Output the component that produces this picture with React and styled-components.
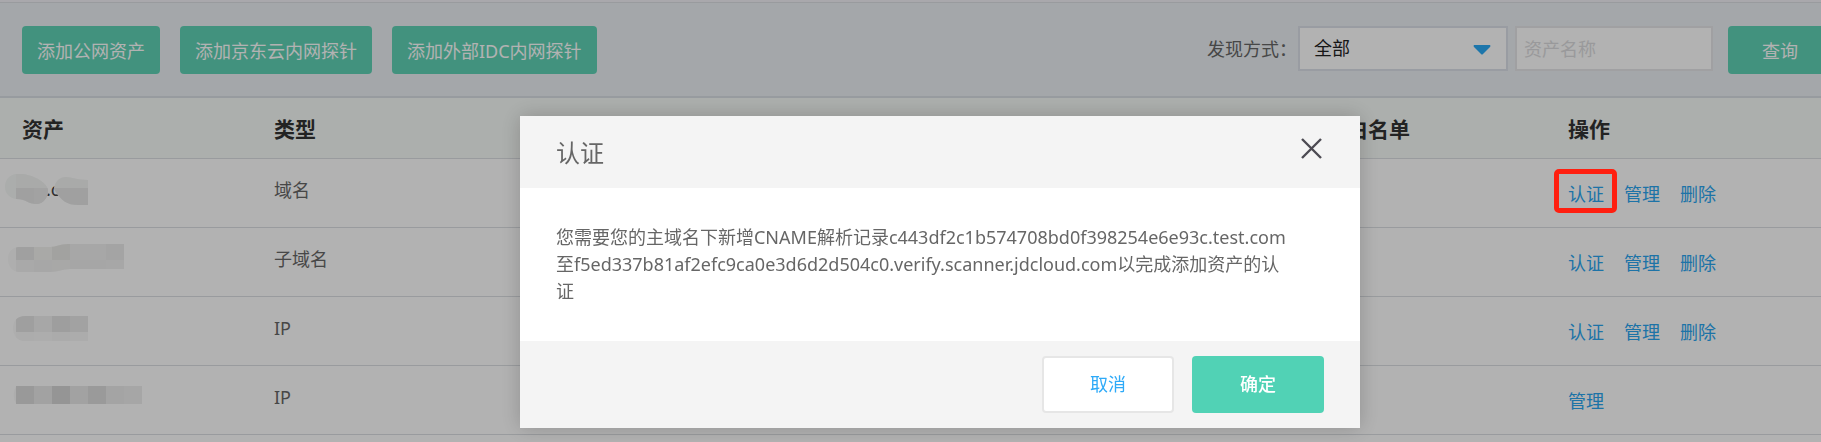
import React from "react";
import styled, { createGlobalStyle, css } from "styled-components";

const GlobalStyle = createGlobalStyle`
  *, *::before, *::after { box-sizing: border-box; }
  html { overflow: hidden; }
  body {
    margin: 0;
    background: #fff;
    color: #666;
    font-family: "Noto Sans", "Noto Sans CJK SC", sans-serif;
    font-size: 18px;
    line-height: 27px;
  }
  button, input, select { font: inherit; }
`;

const Page = styled.div`
  overflow: hidden;
  border-top: 2px solid #f3f1f7;
`;

const Toolbar = styled.header`
  display: flex;
  align-items: flex-start;
  justify-content: space-between;
  padding: 23px 0 22px 22px;
  background: #ebf0f4;
  border-top: 1px solid #dcdfe3;
  border-bottom: 2px solid #d8dfe4;
`;

const Actions = styled.div`
  display: flex;
  gap: 20px;
`;

const Button = styled.button`
  flex: none;
  height: 48px;
  padding: 2px ${(p) => (p.$wide ? 34 : 15)}px 0;
  border: 0;
  border-radius: 4px;
  background: #5fd2b5;
  color: #fff;
  white-space: nowrap;
  cursor: pointer;
`;

const Filters = styled.form`
  display: flex;
  flex: none;
  align-items: flex-start;
  margin-right: -11px;
`;

const FilterLabel = styled.label`
  margin-right: 1px;
  line-height: 46px;
`;

const SelectBox = styled.div`
  position: relative;
  width: 210px;
  margin-right: 7px;
`;

const field = css`
  display: block;
  height: 45px;
  border-radius: 0;
  background: #fff;
  outline: 0;
`;

const Select = styled.select`
  ${field}
  width: 100%;
  padding: 0 40px 0 14px;
  border: 2px solid #dbe0e8;
  appearance: none;
  color: #222;
`;

const Arrow = styled.svg`
  position: absolute;
  top: 19px;
  right: 17px;
  pointer-events: none;
`;

const TextInput = styled.input`
  ${field}
  width: 198px;
  margin-right: 15px;
  padding: 0 7px;
  border: 2px solid #e6e6e8;
  &::placeholder { color: #dcdcde; opacity: 1; }
`;

const Table = styled.table`
  width: 100%;
  table-layout: fixed;
  border-collapse: separate;
  border-spacing: 0;
`;

const Col = styled.col`
  width: ${(p) => (p.$w ? `${p.$w}px` : "auto")};
`;

const Th = styled.th`
  height: 61px;
  padding: 2px 0 0 22px;
  background: #f7fbf8;
  border-bottom: 1px solid #dcdfe3;
  color: #333;
  font-size: 21px;
  font-weight: 700;
  text-align: left;
`;

const Td = styled.td`
  height: 69px;
  padding: ${(p) => (p.$links ? "22px 0 0 22px" : "18px 0 0 22px")};
  border-bottom: 1px solid #dcdfe3;
  vertical-align: top;
`;

const AssetCell = styled(Td)`
  padding: 0;
`;

const Mosaic = styled.svg`
  display: block;
  font-size: 18px;
`;

const Links = styled.div`
  display: flex;
  gap: 20px;
`;

const Link = styled.a`
  position: relative;
  color: #2aa5f0;
  text-decoration: none;
`;

const Marker = styled.span`
  position: absolute;
  z-index: 20;
  inset: -12px -13px -5px -14px;
  border: 5px solid #ff1f10;
  border-radius: 5px;
  pointer-events: none;
`;

const Overlay = styled.div`
  position: fixed;
  z-index: 10;
  inset: 0;
  display: flex;
  align-items: flex-start;
  justify-content: center;
  padding: 116px 0 0 59px;
  background: rgba(0, 0, 0, 0.3);
`;

const Dialog = styled.section`
  width: 840px;
  background: #fff;
  box-shadow: 0 0 20px rgba(0, 0, 0, 0.2);
`;

const DialogHeader = styled.header`
  display: flex;
  align-items: flex-start;
  justify-content: space-between;
  padding: 19px 36px 17px;
  background: #f4f4f4;
`;

const DialogTitle = styled.h2`
  margin: 0;
  font-size: 24px;
  font-weight: 400;
  line-height: 36px;
`;

const CloseButton = styled.button`
  display: flex;
  padding: 3px 2px;
  border: 0;
  background: none;
  color: #4c4a52;
  cursor: pointer;
`;

const DialogBody = styled.p`
  margin: 0;
  padding: 36px 72px 36px 36px;
`;

const DialogFooter = styled.footer`
  display: flex;
  justify-content: flex-end;
  gap: 18px;
  padding: 15px 36px;
  background: #f4f4f4;
`;

const DialogButton = styled.button`
  width: 132px;
  height: 57px;
  border: ${(p) => (p.$primary ? "0" : "2px solid #e6e6e6")};
  border-radius: 4px;
  background: ${(p) => (p.$primary ? "#51d2b5" : "#fff")};
  color: ${(p) => (p.$primary ? "#fff" : "#2eaaf8")};
  font-weight: ${(p) => (p.$primary ? 500 : 400)};
  cursor: pointer;
`;

const Blocks = ({ y, height, colors, size = 18 }) =>
  colors.map((fill, i) => (
    <rect key={i} x={16 + i * size} y={y} width={size} height={height} fill={fill} />
  ));

const DomainMask = () => (
  <Mosaic width="150" height="68" viewBox="0 0 150 68" aria-hidden="true">
    <defs>
      <clipPath id="domain-blobs">
        <path d="M16 15C9 16 5 21 5 28C5 35 10 39 16 40C26 40 28 45 36 45C43 45 48 39 48 31C47 23 32 15 20 15Z" />
        <path d="M54 30C55 22 60 18 66 18C72 18 76 21 88 21V46H78C67 46 61 42 54 30Z" />
      </clipPath>
    </defs>
    <text x="46" y="37" fill="#444">.c</text>
    <g clipPath="url(#domain-blobs)">
      <rect width="150" height="68" fill="#f5f8f6" />
      <rect x="16" y="14" width="72" height="15" fill="#f3f4f3" />
      <rect x="16" y="29" width="72" height="18" fill="#e6e6e6" />
      <rect x="34" y="29" width="18" height="18" fill="#e9e9e9" />
    </g>
  </Mosaic>
);

const SubdomainMask = () => (
  <Mosaic width="150" height="68" viewBox="0 0 150 68" aria-hidden="true">
    <defs>
      <clipPath id="subdomain-shape">
        <path d="M18 19H50C57 19 59 16 68 16H124V41H70C62 41 59 44 50 44H20C12 44 8 38 8 31C8 24 12 20 18 19Z" />
      </clipPath>
    </defs>
    <g clipPath="url(#subdomain-shape)">
      <rect width="150" height="68" fill="#f9faf9" />
      <Blocks y={15} height={17} colors={["#e6e6e6", "#f2f2f0", "#e9e9e5", "#f0f0f0", "#f0f0f0", "#ebebeb"]} />
      <Blocks y={32} height={13} colors={["#f2f2f2", "#f0f0f0", "#f1f1f0", "#eeeeee", "#eeeeee", "#f0f0f0"]} />
    </g>
  </Mosaic>
);

const ShortIpMask = () => (
  <Mosaic width="150" height="68" viewBox="0 0 150 68" aria-hidden="true">
    <defs>
      <clipPath id="short-ip-shape">
        <path d="M25 19H88V44H25C17 44 13 38 13 31C13 24 17 19 25 19Z" />
      </clipPath>
    </defs>
    <g clipPath="url(#short-ip-shape)">
      <rect width="150" height="68" fill="#fafafa" />
      <Blocks y={19} height={16} colors={["#e4e4e4", "#f0f0f0", "#e2e2e2", "#e8e8e8"]} />
      <Blocks y={35} height={9} colors={["#f6f6f6", "#f8f8f8", "#f5f5f5", "#f7f7f7"]} />
    </g>
  </Mosaic>
);

const LongIpMask = () => (
  <Mosaic width="150" height="68" viewBox="0 0 150 68" aria-hidden="true">
    <path d="M16 21C13 25 13 33 16 37Z" fill="#f8f8f8" />
    <Blocks
      y={20}
      height={18}
      colors={["#dbdbdb", "#e8e8e8", "#d6d6d6", "#e9e9e9", "#dddddd", "#ebebeb", "#eeeeee"]}
    />
  </Mosaic>
);

const rows = [
  { Mask: DomainMask, type: "域名", links: ["认证", "管理", "删除"], marked: true },
  { Mask: SubdomainMask, type: "子域名", links: ["认证", "管理", "删除"] },
  { Mask: ShortIpMask, type: "IP", links: ["认证", "管理", "删除"] },
  { Mask: LongIpMask, type: "IP", links: ["管理"] },
];

export default function App() {
  return (
    <>
      <GlobalStyle />
      <Page>
        <Toolbar>
          <Actions>
            <Button type="button">添加公网资产</Button>
            <Button type="button">添加京东云内网探针</Button>
            <Button type="button">添加外部IDC内网探针</Button>
          </Actions>
          <Filters onSubmit={(e) => e.preventDefault()}>
            <FilterLabel htmlFor="discovery">发现方式：</FilterLabel>
            <SelectBox>
              <Select id="discovery" defaultValue="all">
                <option value="all">全部</option>
              </Select>
              <Arrow width="18" height="10" viewBox="0 0 18 10" aria-hidden="true">
                <path d="M1 0H17Q18 1 17 2L10 9Q9 10 8 9L1 2Q0 1 1 0Z" fill="#2aa9f5" />
              </Arrow>
            </SelectBox>
            <TextInput type="text" placeholder="资产名称" aria-label="资产名称" />
            <Button type="submit" $wide>查询</Button>
          </Filters>
        </Toolbar>
        <Table>
          <colgroup>
            <Col $w={252} />
            <Col $w={252} />
            <Col />
            <Col $w={221} />
            <Col $w={275} />
          </colgroup>
          <thead>
            <tr>
              <Th>资产</Th>
              <Th>类型</Th>
              <Th />
              <Th>白名单</Th>
              <Th>操作</Th>
            </tr>
          </thead>
          <tbody>
            {rows.map(({ Mask, type, links, marked }, i) => (
              <tr key={i}>
                <AssetCell><Mask /></AssetCell>
                <Td>{type}</Td>
                <Td />
                <Td />
                <Td $links>
                  <Links>
                    {links.map((text, n) => (
                      <Link href="#" key={text}>
                        {text}
                        {marked && n === 0 && <Marker />}
                      </Link>
                    ))}
                  </Links>
                </Td>
              </tr>
            ))}
          </tbody>
        </Table>
      </Page>
      <Overlay>
        <Dialog role="dialog" aria-modal="true" aria-labelledby="dialog-title">
          <DialogHeader>
            <DialogTitle id="dialog-title">认证</DialogTitle>
            <CloseButton type="button" aria-label="关闭">
              <svg width="21" height="21" viewBox="0 0 21 21" fill="none" stroke="currentColor" strokeWidth="2.4" aria-hidden="true">
                <path d="M1 1L20 20M20 1L1 20" />
              </svg>
            </CloseButton>
          </DialogHeader>
          <DialogBody>
            您需要您的主域名下新增CNAME解析记录c443df2c1b574708bd0f398254e6e93c.test.com至f5ed337b81af2efc9ca0e3d6d2d504c0.verify.scanner.jdcloud.com以完成添加资产的认证
          </DialogBody>
          <DialogFooter>
            <DialogButton type="button">取消</DialogButton>
            <DialogButton type="button" $primary>确定</DialogButton>
          </DialogFooter>
        </Dialog>
      </Overlay>
    </>
  );
}
